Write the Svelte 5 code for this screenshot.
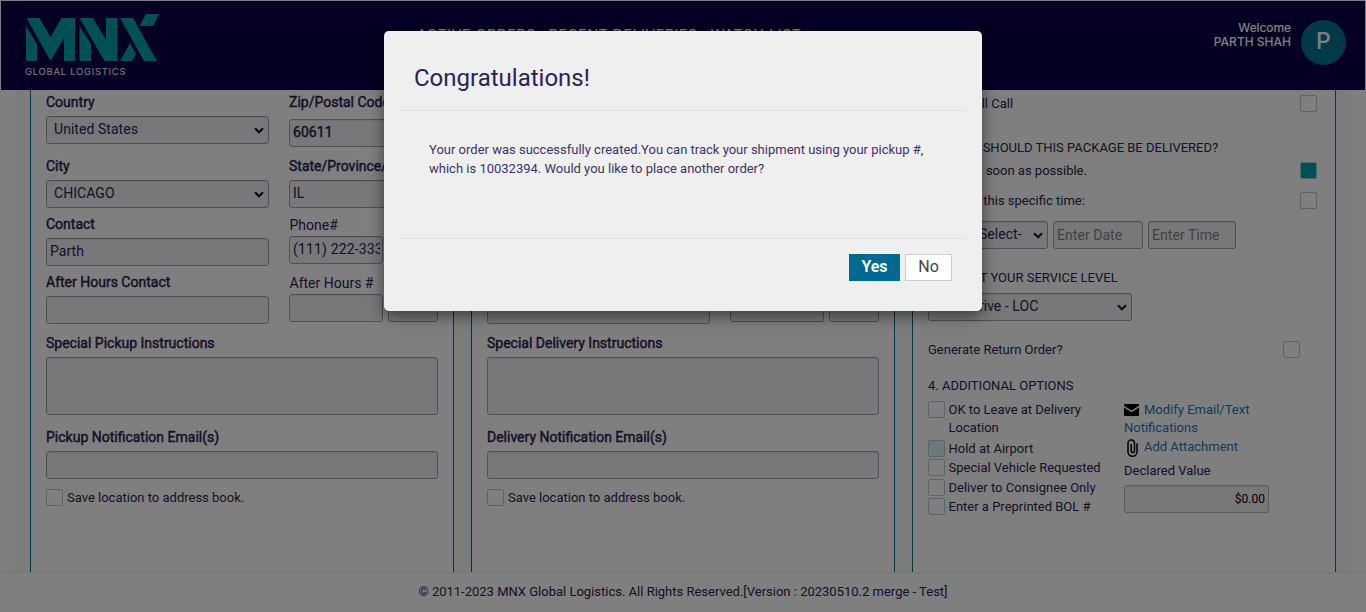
<script>
  const pickup = {
    country: 'United States', zip: '60611', city: 'CHICAGO', state: 'IL',
    contact: 'Parth', phone: '(111) 222-333', name: 'Pickup'
  };
  const delivery = {
    country: 'United States', zip: '', city: '', state: '',
    contact: '', phone: '', name: 'Delivery'
  };
  const options = [
    { text: 'OK to Leave at Delivery Location', h: 39 },
    { text: 'Hold at Airport', h: 19, shaded: true },
    { text: 'Special Vehicle Requested', h: 20 },
    { text: 'Deliver to Consignee Only', h: 19 },
    { text: 'Enter a Preprinted BOL #', h: 19 }
  ];
</script>

{#snippet chevron()}
  <svg class="chev" width="10" height="7" viewBox="0 0 10 7"><path d="M1 1.2 5 5.2 9 1.2" fill="none" stroke="#120a44" stroke-width="2.1" /></svg>
{/snippet}

{#snippet address(a)}
  <section class="panel">
    <div class="cols">
      <div class="main">
        <div class="lbl first">Country</div>
        <div class="box select"><span>{a.country}</span>{@render chevron()}</div>
        <div class="lbl mid">City</div>
        <div class="box select"><span>{a.city}</span>{@render chevron()}</div>
        <div class="lbl near">Contact</div>
        <div class="box">{a.contact}</div>
        <div class="lbl near">After Hours Contact</div>
        <div class="box"></div>
      </div>
      <div class="side">
        <div class="lbl first zip">Zip/Postal Code</div>
        <div class="box strong">{a.zip}</div>
        <div class="lbl state">State/Province/Region</div>
        <div class="box">{a.state}</div>
        <div class="lbl plain">Phone#</div>
        <div class="pair"><div class="box"><div class="clip">{a.phone}</div></div><div class="box"></div></div>
        <div class="lbl plain after">After Hours #</div>
        <div class="pair"><div class="box"></div><div class="box"></div></div>
      </div>
    </div>
    <div class="lbl special">Special {a.name} Instructions</div>
    <div class="box area"></div>
    <div class="lbl mid">{a.name} Notification Email(s)</div>
    <div class="box"></div>
    <div class="save"><i class="cb"></i><span>Save location to address book.</span></div>
  </section>
{/snippet}

<div class="page">
  <header>
    <div class="brand">
      <svg width="134" height="48" viewBox="0 0 134 48" fill="#00a0a8">
        <path d="M1.5 4H14.5L25.5 23 36.5 4H50V47H39V24L25.5 47Z" />
        <path d="M1 12 12 30V47H1Z" />
        <path d="M54.5 4H68L81 26V4H92.500V47H79.500Z" />
        <path d="M54.500 12 66 30V47H54.500Z" />
        <path d="M95 4H108L132 47H119Z" />
        <path d="M121 0H134.500L128 12H114.500Z" />
        <path d="M95 47 105 29 111 40 107 47Z" />
      </svg>
      <div class="tag">GLOBAL LOGISTICS</div>
    </div>
    <nav><span>ACTIVE ORDERS</span><span>RECENT DELIVERIES</span><span>WATCH LIST</span></nav>
    <div class="user">
      <div class="who"><div class="wel">Welcome</div><div class="nm">PARTH SHAH</div></div>
      <div class="avatar">P</div>
    </div>
  </header>

  <main>
    {@render address(pickup)}
    {@render address(delivery)}
    <section class="panel opts">
      <div class="line call"><span>Will Call</span><i class="cb"></i></div>
      <div class="head when">2. WHEN SHOULD THIS PACKAGE BE DELIVERED?</div>
      <div class="line asap"><span>As soon as possible.</span><i class="cb on"></i></div>
      <div class="line spec"><span>At this specific time:</span><i class="cb"></i></div>
      <div class="times">
        <div class="box select t1"><span>-Select-</span>{@render chevron()}</div>
        <div class="box ph t2">Enter Date</div>
        <div class="box ph t3">Enter Time</div>
      </div>
      <div class="head level">3. SELECT YOUR SERVICE LEVEL</div>
      <div class="box select svc"><span>Local Drive - LOC</span>{@render chevron()}</div>
      <div class="line ret"><span>Generate Return Order?</span><i class="cb"></i></div>
      <div class="head addl">4. ADDITIONAL OPTIONS</div>
      <div class="extra">
        <div class="checks">
          {#each options as o}
            <div class="opt" style="height:{o.h}px"><i class="cb" class:shaded={o.shaded}></i><span>{o.text}</span></div>
          {/each}
        </div>
        <div class="links">
          <div class="lk"><svg class="mail" width="15" height="12" viewBox="0 0 15 12"><path d="M0 0H15V1.8L7.5 6.6 0 1.8Z M0 3.4 7.5 8.2 15 3.4V12H0Z" /></svg><a>Modify Email/Text Notifications</a></div>
          <div class="lk att"><svg width="11" height="18" viewBox="0 0 11 18"><path d="M10 4.5V12.700a4.500 4.500 0 0 1-9 0V4.200a3.200 3.200 0 0 1 6.500 0V12.300a1.700 1.700 0 0 1-3.300 0V5" fill="none" stroke="#000" stroke-width="1.5" /></svg><a>Add Attachment</a></div>
          <div class="dv">Declared Value</div>
          <div class="box value">$0.00</div>
        </div>
      </div>
    </section>
  </main>

  <footer>© 2011-2023 MNX Global Logistics. All Rights Reserved.[Version : 20230510.2 merge - Test]</footer>

  <div class="shade">
    <div class="modal">
      <h1>Congratulations!</h1>
      <p>Your order was successfully created.You can track your shipment using your pickup #, which is 10032394. Would you like to place another order?</p>
      <div class="acts"><button class="yes">Yes</button><button class="no">No</button></div>
    </div>
  </div>
</div>

<style>
  :global(body) { margin: 0; overflow: hidden; }
  .page, .page * { box-sizing: border-box; }
  .page { width: 1366px; height: 612px; position: relative; overflow: hidden; background: #fff; font: 400 13px/18px Roboto, sans-serif; color: #2a2450; display: flex; flex-direction: column; }
  header { height: 89px; margin: 1px 1px 0; background: #0a0046; display: flex; justify-content: space-between; flex: none; font-family: Inter, sans-serif; color: #fff; }
  .brand { padding: 13px 0 0 24px; width: 416px; }
  .brand svg { display: block; overflow: visible; }
  .tag { font-size: 9.5px; line-height: 12px; margin-top: 4px; letter-spacing: .7px; }
  nav { display: flex; gap: 13px; padding-top: 25px; font-size: 14px; line-height: 18px; flex: 1; letter-spacing: .64px; }
  .user { display: flex; padding: 19px 19px 0 0; gap: 10px; }
  .who { text-align: right; font-size: 12px; line-height: 14px; padding-top: 1px; font-weight: 500; }
  .wel { letter-spacing: -.1px; }
  .avatar { width: 45px; height: 45px; border-radius: 50%; background: #007291; font-size: 23px; line-height: 43px; text-align: center; font-weight: 500; }
  main { height: 482px; flex: none; margin: 0 15px; padding: 0 15px; display: flex; gap: 17px; background: #f5faf9; }
  .panel { width: 424px; background: #fff; border: solid #006a8f; border-width: 0 1px; padding: 0 15px; }
  .cols { display: flex; gap: 20px; }
  .main { width: 223px; }
  .side { width: 149px; }
  .lbl { font-size: 14px; line-height: 20px; -webkit-text-stroke: .45px; margin-bottom: 4px; white-space: nowrap; }
  .first { margin-top: 2px; }
  .mid { margin-top: 12px; }
  .near { margin-top: 6px; }
  .special { margin-top: 9px; }
  .zip { margin-bottom: 7px; }
  .state { margin-top: 9px; }
  .plain { -webkit-text-stroke: 0; margin: 7px 0 1px; padding-left: .5px; }
  .after { margin-top: 9px; }
  .box { height: 28px; border: 1px solid #a2a2a2; border-radius: 3px; background: #f0f0f4; box-shadow: inset 0 1px 1px rgba(0,0,0,.075); padding: 0 3px; font-size: 14px; line-height: 25px; white-space: nowrap; letter-spacing: .05px; }
  .select { display: flex; justify-content: space-between; align-items: center; padding: 0 4px 0 7px; }
  .select span { line-height: 24px; padding-bottom: 2px; }
  .strong { -webkit-text-stroke: .45px; }
  .pair { display: flex; gap: 5px; }
  .pair .box { width: 94px; }
  .pair .box + .box { width: 50px; }
  .clip { overflow: hidden; width: 87px; letter-spacing: .15px; }
  .area { height: 58px; }
  .cb { display: block; flex: none; width: 17px; height: 17px; border: 1px solid #a9d0d3; border-radius: 2px; }
  .on { background: #00a0b0; }
  .shaded { background: #ddeff2; }
  .save { margin-top: 10px; display: flex; gap: 4px; line-height: 17px; }
  .line { display: flex; justify-content: space-between; line-height: 17px; padding-right: 3px; }
  .call { padding-top: 5px; }
  .call span { padding-left: 39px; }
  .when { margin-top: 27px; }
  .asap { margin-top: 5px; }
  .asap span, .spec span { padding-left: 39.5px; }
  .spec { margin-top: 13px; }
  .times { display: flex; gap: 5px; margin-top: 12px; }
  .t1 { width: 120px; padding-left: 46px; }
  .t2 { width: 90px; }
  .t3 { width: 88px; }
  .ph { color: #858585; line-height: 26px; }
  .level { margin-top: 20px; margin-bottom: 6px; }
  .svc { width: 204px; padding-left: 3px; }
  .ret { margin-top: 20px; padding-right: 20px; }
  .addl { margin-top: 19px; }
  .extra { display: flex; margin-top: 6px; }
  .checks { width: 196px; }
  .opt { display: flex; gap: 3.5px; line-height: 18px; }
  .opt span { width: 158px; }
  .links { width: 150px; }
  .lk { height: 37px; line-height: 18px; }
  .lk a { color: #2478b8; margin-left: 5px; }
  .mail { display: inline-block; vertical-align: -2px; }
  .lk.att { height: 23px; display: flex; }
  .att svg { margin: 1px 0 0 3px; }
  .att a { margin-left: 6px; }
  .dv { margin: 1px 0 5px; }
  .value { width: 145px; text-align: right; font-size: 12px; color: #000; border-color: #b8b8bc; letter-spacing: 0; line-height: 26px; }
  footer { flex: 1; border-top: 1px solid #edf0f0; text-align: center; line-height: 38px; }
  .shade { position: absolute; inset: 0; background: rgba(0,0,0,.5); }
  .modal { width: 598px; height: 280px; margin: 31px 0 0 384px; padding: 0 15px; border-radius: 5px; background: #efefef; box-shadow: 0 5px 15px rgba(0,0,0,.5); color: #3d3467; }
  h1 { margin: 0; height: 80px; border-bottom: 1px solid #e3e3e3; padding: 31px 15px 0; font-size: 24px; line-height: 32px; font-weight: 400; color: #2c2258; }
  p { margin: 0; height: 128px; border-bottom: 1px solid #e3e3e3; padding: 29px 30px 0; line-height: 19px; }
  .acts { display: flex; justify-content: flex-end; gap: 5px; padding: 15px 15px 0; }
  button { font: 400 16px/23px Roboto, sans-serif; height: 27px; padding: 0 0 2px; border: 1px solid #ccc; background: #fff; color: #444; }
  .yes { width: 51px; background: #00698f; border-color: #00698f; color: #fff; font-weight: 600; }
  .no { width: 47px; }
</style>
